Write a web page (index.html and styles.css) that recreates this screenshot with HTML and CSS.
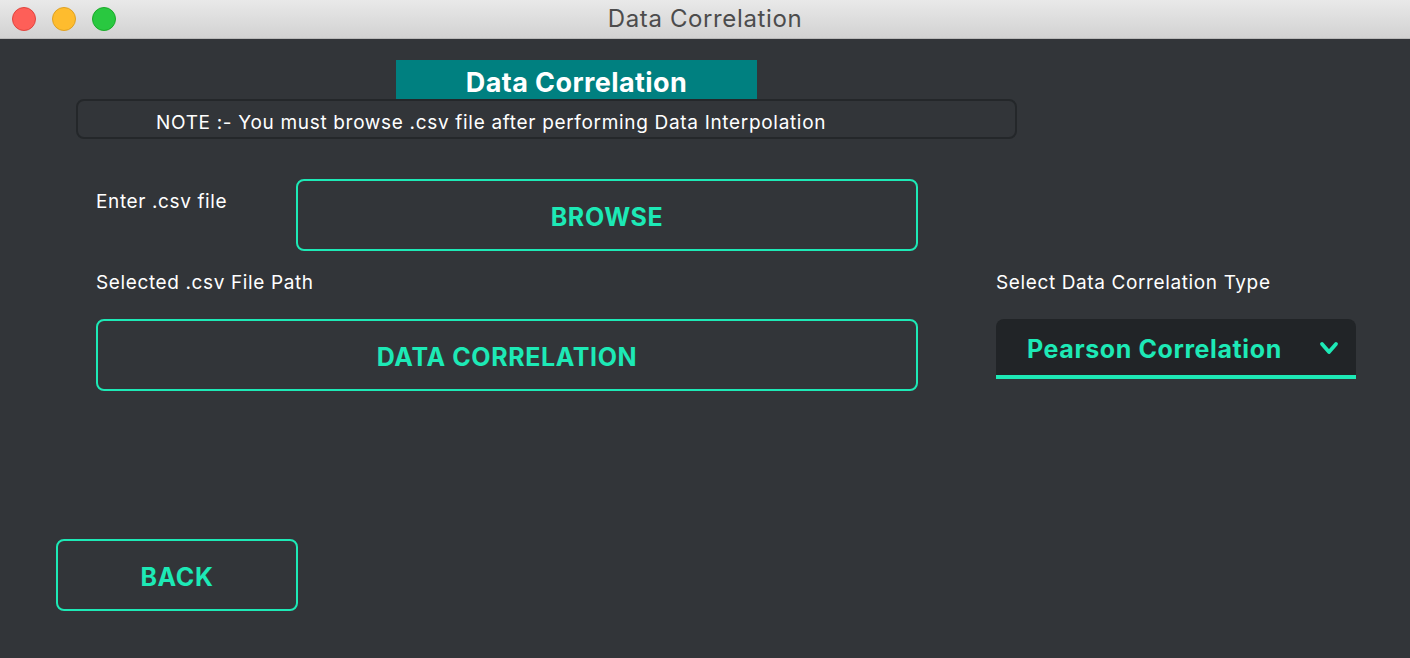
FILE: index.html
```html
<!DOCTYPE html>
<html>
<head>
<meta charset="utf-8">
<link rel="stylesheet" href="styles.css">
</head>
<body>
<div class="window">
  <div class="titlebar">
    <div class="lights">
      <span class="light red"></span>
      <span class="light yellow"></span>
      <span class="light green"></span>
    </div>
    <div class="wtitle">Data Correlation</div>
  </div>
  <div class="content">
    <div class="heading">Data Correlation</div>
    <div class="note">NOTE :- You must browse .csv file after performing Data Interpolation</div>
    <div class="row row-browse">
      <div class="label label-enter">Enter .csv file</div>
      <button class="btn btn-browse">BROWSE</button>
    </div>
    <div class="row row-labels">
      <div class="label label-path">Selected .csv File Path</div>
      <div class="label label-type">Select Data Correlation Type</div>
    </div>
    <div class="row row-actions">
      <button class="btn btn-corr">DATA CORRELATION</button>
      <div class="select">
        <span class="select-text">Pearson Correlation</span>
        <svg class="chev" width="20" height="14" viewBox="0 0 20 14"><path d="M3 3 L10 11 L17 3" fill="none" stroke="#1de9b6" stroke-width="3.8" stroke-linecap="round" stroke-linejoin="round"/></svg>
      </div>
    </div>
    <div class="row row-back">
      <button class="btn btn-back">BACK</button>
    </div>
  </div>
</div>
</body>
</html>
```
FILE: styles.css
```css
html, body {
  margin: 0;
  padding: 0;
}
body {
  width: 1410px;
  height: 658px;
  overflow: hidden;
  background: #323539;
  font-family: "Inter", sans-serif;
}
.window {
  display: flex;
  flex-direction: column;
  height: 658px;
}
.titlebar {
  height: 38px;
  border-bottom: 1px solid #b9b9b9;
  background: linear-gradient(#e9e9e9, #d2d2d2);
  display: flex;
  align-items: center;
  position: relative;
}
.lights {
  display: flex;
  gap: 16px;
  padding-left: 12px;
}
.light {
  width: 24px;
  height: 24px;
  border-radius: 50%;
  box-sizing: border-box;
}
.red { background: #fe5f58; border: 1px solid #e0443e; }
.yellow { background: #febc2e; border: 1px solid #dea123; }
.green { background: #29c840; border: 1px solid #1aab29; }
.wtitle {
  position: absolute;
  left: 0;
  right: 0;
  top: 0;
  height: 38px;
  line-height: 38px;
  text-align: center;
  font-size: 24px;
  letter-spacing: 0.62px;
  color: #4c4c4c;
  pointer-events: none;
}
.content {
  flex: 1;
  padding-top: 21px;
}
.heading {
  margin-left: 396px;
  width: 361px;
  height: 39px;
  background: #008080;
  color: #fff;
  font-weight: 700;
  font-size: 27px;
  letter-spacing: 0.4px;
  text-align: center;
  line-height: 46px;
}
.note {
  margin-left: 76px;
  width: 941px;
  height: 40px;
  box-sizing: border-box;
  border: 2px solid #24272a;
  border-radius: 8px;
  color: #fff;
  font-size: 19px;
  letter-spacing: 0.68px;
  line-height: 40px;
  padding-top: 2px;
  padding-left: 78px;
  white-space: nowrap;
}
.row {
  display: flex;
}
.label {
  color: #fff;
  font-size: 19px;
  letter-spacing: 0.62px;
  white-space: nowrap;
}
.row-browse {
  margin-top: 40px;
  padding-left: 96px;
}
.label-enter {
  width: 200px;
  padding-top: 11px;
}
.btn {
  background: transparent;
  border: 2px solid #1de9b6;
  border-radius: 8px;
  color: #1de9b6;
  font-family: "Inter", sans-serif;
  font-weight: 700;
  font-size: 25px;
  letter-spacing: 0.6px;
  height: 72px;
  padding: 4px 0 0 0;
  box-sizing: border-box;
}
.btn-browse {
  width: 622px;
}
.row-labels {
  margin-top: 16px;
  padding-left: 96px;
  height: 30px;
  align-items: center;
}
.label-path {
  width: 900px;
}
.row-actions {
  margin-top: 22px;
  padding-left: 96px;
  align-items: flex-start;
}
.btn-corr {
  width: 822px;
}
.select {
  margin-left: 78px;
  width: 360px;
  height: 60px;
  box-sizing: border-box;
  background: #212427;
  border-radius: 8px 8px 0 0;
  border-bottom: 4px solid #1de9b6;
  display: flex;
  align-items: center;
  padding-left: 31px;
  padding-right: 17px;
}
.select-text {
  flex: 1;
  color: #1de9b6;
  font-weight: 700;
  font-size: 25px;
  letter-spacing: 0.6px;
  padding-top: 4px;
  white-space: nowrap;
}
.chev {
  margin-top: 2px;
}
.row-back {
  margin-top: 148px;
  padding-left: 56px;
}
.btn-back {
  width: 242px;
}
```
